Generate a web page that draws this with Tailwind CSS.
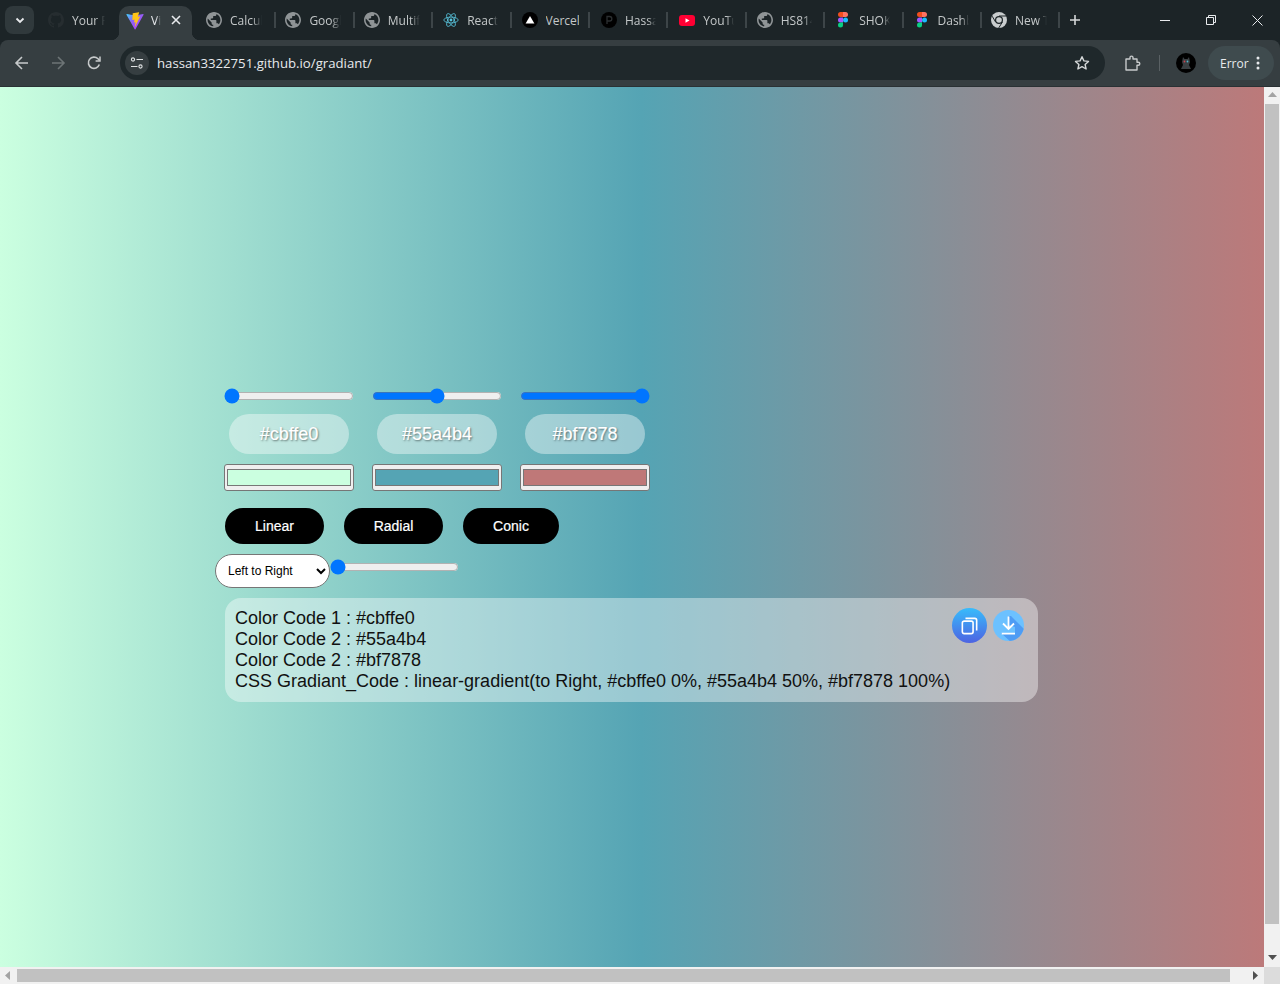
<!DOCTYPE html>
<html>
<head>
<meta charset="utf-8">
<title>Gradiant</title>
<script src="https://cdn.jsdelivr.net/npm/@tailwindcss/browser@4"></script>
</head>
<body class="m-0 w-[1280px] h-[984px] overflow-hidden bg-[#1c2427] font-['Liberation_Sans',Arial,sans-serif]">
<div class="flex flex-col w-[1280px] h-[984px]">

  <!-- Tab strip -->
  <div class="flex items-start h-[40px] bg-[#1c2427] font-['Open_Sans',sans-serif] text-[12px] text-[#c4c8c9] shrink-0">
    <div class="ml-[5px] mt-[6px] w-[29px] h-[28px] rounded-[8px] bg-[#30393c] flex items-center justify-center">
      <svg width="12" height="12" viewBox="0 0 12 12" fill="none" stroke="#e8eaed" stroke-width="1.8"><path d="M2.5 4.5 6 8l3.5-3.5"/></svg>
    </div>
    <!-- tab 1 -->
    <div class="ml-[6px] w-[78px] h-[40px] flex items-center gap-[8px] pl-[8px]">
      <svg width="16" height="16" viewBox="0 0 16 16" fill="#262d30"><path d="M8 0C3.58 0 0 3.58 0 8c0 3.54 2.29 6.53 5.47 7.59.4.07.55-.17.55-.38 0-.19-.01-.82-.01-1.49-2.01.37-2.53-.49-2.69-.94-.09-.23-.48-.94-.82-1.13-.28-.15-.68-.52-.01-.53.63-.01 1.08.58 1.23.82.72 1.21 1.87.87 2.33.66.07-.52.28-.87.51-1.07-1.78-.2-3.64-.89-3.64-3.95 0-.87.31-1.59.82-2.15-.08-.2-.36-1.02.08-2.12 0 0 .67-.21 2.2.82.64-.18 1.32-.27 2-.27s1.36.09 2 .27c1.53-1.04 2.2-.82 2.2-.82.44 1.1.16 1.92.08 2.12.51.56.82 1.27.82 2.15 0 3.07-1.87 3.75-3.65 3.95.29.25.54.73.54 1.48 0 1.07-.01 1.93-.01 2.2 0 .21.15.46.55.38A8.01 8.01 0 0 0 16 8c0-4.42-3.58-8-8-8z"/></svg>
      <span class="w-[33px] pt-[2px] overflow-hidden whitespace-nowrap [mask-image:linear-gradient(to_right,black_70%,transparent)]">Your Repositories</span>
    </div>
    <!-- active tab -->
    <div class="relative mt-[6px] w-[73px] ml-[1px] mr-[4px] h-[34px] pb-[5px] bg-[#363e41] rounded-t-[10px] flex items-center pl-[7px] text-[#e8eaed]">
      <div class="absolute left-[-8px] bottom-0 w-[8px] h-[8px] bg-[radial-gradient(circle_at_0_0,transparent_8px,#363e41_8.5px)]"></div>
      <div class="absolute right-[-8px] bottom-0 w-[8px] h-[8px] bg-[radial-gradient(circle_at_100%_0,transparent_8px,#363e41_8.5px)]"></div>
      <svg width="18" height="18" viewBox="0 0 410 404" fill="none">
        <defs><linearGradient id="vp" x1="0" y1="0" x2="1" y2="1"><stop offset="0" stop-color="#41d1ff"/><stop offset="0.4" stop-color="#8e63f5"/><stop offset="1" stop-color="#bd34fe"/></linearGradient></defs>
        <path fill="url(#vp)" d="M399.641 59.5246L215.643 388.545C211.844 395.338 202.084 395.378 198.228 388.618L10.5817 59.5563C6.38087 52.1896 12.6802 43.2665 21.0281 44.7586L205.223 77.6824C206.398 77.8924 207.601 77.8904 208.776 77.6763L389.119 44.8058C397.439 43.2894 403.768 52.1434 399.641 59.5246Z"/>
        <path fill="#ffc517" d="M292.965 1.5744L156.801 28.2552C154.563 28.6937 152.906 30.5903 152.771 32.8664L144.395 174.33C144.198 177.662 147.258 180.248 150.51 179.498L188.42 170.749C191.967 169.931 195.172 173.055 194.443 176.622L183.18 231.775C182.422 235.487 185.907 238.661 189.532 237.56L212.947 230.446C216.577 229.344 220.065 232.527 219.297 236.242L201.398 322.875C200.278 328.294 207.486 331.249 210.492 326.603L212.5 323.5L323.454 102.072C325.312 98.3645 322.108 94.137 318.036 94.9228L279.014 102.454C275.347 103.161 272.227 99.746 273.262 96.1583L298.731 7.86689C299.767 4.27314 296.636 0.855181 292.965 1.5744Z"/>
      </svg>
      <span class="ml-[7px] w-[10px] overflow-hidden whitespace-nowrap [mask-image:linear-gradient(to_right,black_50%,transparent)]">Vite</span>
      <svg class="absolute left-[52px] top-[9px]" width="10" height="10" viewBox="0 0 10 10" stroke="#e8eaed" stroke-width="1.6"><path d="M1 1l8 8M9 1 1 9"/></svg>
    </div>

    <!-- tab: Calcul -->
    <div class="w-[78.4px] h-[40px] flex items-center gap-[8px] pl-[10px]">
      <svg width="16" height="16" viewBox="2 2 20 20" fill="#8f9496"><path d="M12 2C6.48 2 2 6.48 2 12s4.48 10 10 10 10-4.48 10-10S17.52 2 12 2zm-1 17.93c-3.95-.49-7-3.85-7-7.93 0-.62.08-1.21.21-1.79L9 15v1c0 1.1.9 2 2 2v1.93zm6.9-2.54c-.26-.81-1-1.39-1.9-1.39h-1v-3c0-.55-.45-1-1-1H8v-2h2c.55 0 1-.45 1-1V7h2c1.1 0 2-.9 2-2v-.41c2.93 1.19 5 4.06 5 7.41 0 2.08-.8 3.97-2.1 5.39z"/></svg>
      <span class="w-[32px] pt-[2px] overflow-hidden whitespace-nowrap [mask-image:linear-gradient(to_right,black_70%,transparent)]">Calculator</span>
    </div>
    <!-- tab: Google -->
    <div class="w-[78.4px] h-[40px] flex items-center gap-[8px] pl-[11px] relative">
      <div class="absolute left-0 top-[12px] w-[2px] h-[16px] bg-[#3d4548]"></div>
      <svg width="16" height="16" viewBox="2 2 20 20" fill="#8f9496"><path d="M12 2C6.48 2 2 6.48 2 12s4.48 10 10 10 10-4.48 10-10S17.52 2 12 2zm-1 17.93c-3.95-.49-7-3.85-7-7.93 0-.62.08-1.21.21-1.79L9 15v1c0 1.1.9 2 2 2v1.93zm6.9-2.54c-.26-.81-1-1.39-1.9-1.39h-1v-3c0-.55-.45-1-1-1H8v-2h2c.55 0 1-.45 1-1V7h2c1.1 0 2-.9 2-2v-.41c2.93 1.19 5 4.06 5 7.41 0 2.08-.8 3.97-2.1 5.39z"/></svg>
      <span class="w-[32px] pt-[2px] overflow-hidden whitespace-nowrap [mask-image:linear-gradient(to_right,black_70%,transparent)]">Google Fonts</span>
    </div>
    <!-- tab: Multi -->
    <div class="w-[78.4px] h-[40px] flex items-center gap-[8px] pl-[11px] relative">
      <div class="absolute left-0 top-[12px] w-[2px] h-[16px] bg-[#3d4548]"></div>
      <svg width="16" height="16" viewBox="2 2 20 20" fill="#8f9496"><path d="M12 2C6.48 2 2 6.48 2 12s4.48 10 10 10 10-4.48 10-10S17.52 2 12 2zm-1 17.93c-3.95-.49-7-3.85-7-7.93 0-.62.08-1.21.21-1.79L9 15v1c0 1.1.9 2 2 2v1.93zm6.9-2.54c-.26-.81-1-1.39-1.9-1.39h-1v-3c0-.55-.45-1-1-1H8v-2h2c.55 0 1-.45 1-1V7h2c1.1 0 2-.9 2-2v-.41c2.93 1.19 5 4.06 5 7.41 0 2.08-.8 3.97-2.1 5.39z"/></svg>
      <span class="w-[32px] pt-[2px] overflow-hidden whitespace-nowrap [mask-image:linear-gradient(to_right,black_70%,transparent)]">Multifile</span>
    </div>
    <!-- tab: React -->
    <div class="w-[78.4px] h-[40px] flex items-center gap-[8px] pl-[12px] relative">
      <div class="absolute left-0 top-[12px] w-[2px] h-[16px] bg-[#3d4548]"></div>
      <svg width="16" height="16" viewBox="0 0 16 16" fill="none" stroke="#58c4dc" stroke-width="0.8"><circle cx="8" cy="8" r="1.4" fill="#58c4dc" stroke="none"/><ellipse cx="8" cy="8" rx="7.2" ry="2.9"/><ellipse cx="8" cy="8" rx="7.2" ry="2.9" transform="rotate(60 8 8)"/><ellipse cx="8" cy="8" rx="7.2" ry="2.9" transform="rotate(120 8 8)"/></svg>
      <span class="w-[31px] pt-[2px] overflow-hidden whitespace-nowrap [mask-image:linear-gradient(to_right,black_75%,transparent)]">React Icons</span>
    </div>
    <!-- tab: Vercel -->
    <div class="w-[78.4px] h-[40px] flex items-center gap-[8px] pl-[12px] relative">
      <div class="absolute left-0 top-[12px] w-[2px] h-[16px] bg-[#3d4548]"></div>
      <svg width="16" height="16" viewBox="0 0 16 16"><circle cx="8" cy="8" r="8" fill="#000"/><path d="M8 4l4.4 7.4H3.6z" fill="#fff"/></svg>
      <span class="w-[33px] pt-[2px] overflow-hidden whitespace-nowrap">Vercel</span>
    </div>
    <!-- tab: Hassan -->
    <div class="w-[78.4px] h-[40px] flex items-center gap-[8px] pl-[13px] relative">
      <div class="absolute left-0 top-[12px] w-[2px] h-[16px] bg-[#3d4548]"></div>
      <svg width="16" height="16" viewBox="0 0 16 16"><circle cx="8" cy="8" r="8" fill="#000"/><path d="M6 12V4.5h2.6a2.2 2.2 0 0 1 0 4.5H6" fill="none" stroke="#2b2f31" stroke-width="1.3"/></svg>
      <span class="w-[31px] pt-[2px] overflow-hidden whitespace-nowrap [mask-image:linear-gradient(to_right,black_75%,transparent)]">Hassan</span>
    </div>
    <!-- tab: YouTube -->
    <div class="w-[78.4px] h-[40px] flex items-center gap-[8px] pl-[13px] relative">
      <div class="absolute left-0 top-[12px] w-[2px] h-[16px] bg-[#3d4548]"></div>
      <svg width="16" height="16" viewBox="0 0 16 16"><rect x="0" y="3" width="16" height="11" rx="3" fill="#ff0033"/><path d="M6.5 6.2v4.6l4-2.3z" fill="#fff"/></svg>
      <span class="w-[31px] pt-[2px] overflow-hidden whitespace-nowrap [mask-image:linear-gradient(to_right,black_75%,transparent)]">YouTube</span>
    </div>
    <!-- tab: HS81 -->
    <div class="w-[78.4px] h-[40px] flex items-center gap-[8px] pl-[12px] relative">
      <div class="absolute left-0 top-[12px] w-[2px] h-[16px] bg-[#3d4548]"></div>
      <svg width="16" height="16" viewBox="2 2 20 20" fill="#8f9496"><path d="M12 2C6.48 2 2 6.48 2 12s4.48 10 10 10 10-4.48 10-10S17.52 2 12 2zm-1 17.93c-3.95-.49-7-3.85-7-7.93 0-.62.08-1.21.21-1.79L9 15v1c0 1.1.9 2 2 2v1.93zm6.9-2.54c-.26-.81-1-1.39-1.9-1.39h-1v-3c0-.55-.45-1-1-1H8v-2h2c.55 0 1-.45 1-1V7h2c1.1 0 2-.9 2-2v-.41c2.93 1.19 5 4.06 5 7.41 0 2.08-.8 3.97-2.1 5.39z"/></svg>
      <span class="w-[31px] pt-[2px] overflow-hidden whitespace-nowrap [mask-image:linear-gradient(to_right,black_75%,transparent)]">HS8140</span>
    </div>
    <!-- tab: SHOK -->
    <div class="w-[78.4px] h-[40px] flex items-center gap-[8px] pl-[12px] relative">
      <div class="absolute left-0 top-[12px] w-[2px] h-[16px] bg-[#3d4548]"></div>
      <svg width="16" height="16" viewBox="0 0 16 16"><path d="M3 2.5A2.5 2.5 0 0 1 5.5 0H8v5H5.5A2.5 2.5 0 0 1 3 2.5z" fill="#f24e1e"/><path d="M8 0h2.5a2.5 2.5 0 0 1 0 5H8z" fill="#ff7262"/><path d="M3 8a2.5 2.5 0 0 1 2.5-2.5H8v5H5.5A2.5 2.5 0 0 1 3 8z" fill="#a259ff"/><circle cx="10.5" cy="8" r="2.5" fill="#1abcfe"/><path d="M3 13a2.5 2.5 0 0 1 2.5-2.5H8V13a2.5 2.5 0 0 1-5 0z" fill="#0acf83"/></svg>
      <span class="w-[31px] pt-[2px] overflow-hidden whitespace-nowrap [mask-image:linear-gradient(to_right,black_75%,transparent)]">SHOKZ</span>
    </div>
    <!-- tab: Dashb -->
    <div class="w-[78.4px] h-[40px] flex items-center gap-[8px] pl-[12px] relative">
      <div class="absolute left-0 top-[12px] w-[2px] h-[16px] bg-[#3d4548]"></div>
      <svg width="16" height="16" viewBox="0 0 16 16"><path d="M3 2.5A2.5 2.5 0 0 1 5.5 0H8v5H5.5A2.5 2.5 0 0 1 3 2.5z" fill="#f24e1e"/><path d="M8 0h2.5a2.5 2.5 0 0 1 0 5H8z" fill="#ff7262"/><path d="M3 8a2.5 2.5 0 0 1 2.5-2.5H8v5H5.5A2.5 2.5 0 0 1 3 8z" fill="#a259ff"/><circle cx="10.5" cy="8" r="2.5" fill="#1abcfe"/><path d="M3 13a2.5 2.5 0 0 1 2.5-2.5H8V13a2.5 2.5 0 0 1-5 0z" fill="#0acf83"/></svg>
      <span class="w-[31px] pt-[2px] overflow-hidden whitespace-nowrap [mask-image:linear-gradient(to_right,black_75%,transparent)]">Dashboard</span>
    </div>
    <!-- tab: New Tab -->
    <div class="w-[78.4px] h-[40px] flex items-center gap-[8px] pl-[11px] relative">
      <div class="absolute left-0 top-[12px] w-[2px] h-[16px] bg-[#3d4548]"></div>
      <svg width="16" height="16" viewBox="0 0 16 16"><circle cx="8" cy="8" r="8" fill="#c9cdce"/><circle cx="8" cy="8" r="4" fill="#1c2427"/><circle cx="8" cy="8" r="2.8" fill="#c9cdce"/><path d="M8 4h7.2M4.6 10 1.2 4.2M11.4 10l-3.7 6" stroke="#1c2427" stroke-width="1"/></svg>
      <span class="w-[32px] pt-[2px] overflow-hidden whitespace-nowrap [mask-image:linear-gradient(to_right,black_70%,transparent)]">New Tab</span>
    </div>
    <!-- new tab plus -->
    <div class="relative w-[34px] h-[40px] flex items-center justify-center">
      <div class="absolute left-0 top-[12px] w-[2px] h-[16px] bg-[#3d4548]"></div>
      <svg width="12" height="12" viewBox="0 0 12 12" stroke="#d5d8d9" stroke-width="1.6"><path d="M6 1v10M1 6h10"/></svg>
    </div>
    <!-- window controls -->
    <div class="ml-auto flex items-center h-[40px]">
      <div class="w-[46px] flex justify-center"><svg width="10" height="10" viewBox="0 0 10 10" stroke="#e8eaed"><path d="M0 5.5h10"/></svg></div>
      <div class="w-[46px] flex justify-center"><svg width="10" height="10" viewBox="0 0 10 10" fill="none" stroke="#e8eaed"><path d="M.5 2.5h7v7h-7zM2.5 2.5v-2h7v7h-2"/></svg></div>
      <div class="w-[46px] flex justify-center"><svg width="11" height="11" viewBox="0 0 11 11" stroke="#e8eaed"><path d="M.5.5l10 10M10.5.5l-10 10"/></svg></div>
    </div>
  </div>

  <!-- Toolbar -->
  <div class="h-[47px] shrink-0 bg-[#363e41] rounded-t-[8px] flex items-center pl-[4px] border-b border-[#2a3134] font-['Open_Sans',sans-serif]">
    <div class="w-[36px] flex justify-center"><svg width="16" height="16" viewBox="0 0 16 16" fill="none" stroke="#c7cacb" stroke-width="1.6"><path d="M14 8H2.5M8 2 2 8l6 6"/></svg></div>
    <div class="w-[36px] flex justify-center"><svg width="16" height="16" viewBox="0 0 16 16" fill="none" stroke="#6d7476" stroke-width="1.6"><path d="M2 8h11.5M8 2l6 6-6 6"/></svg></div>
    <div class="w-[36px] flex justify-center"><svg width="16" height="16" viewBox="0 0 16 16" fill="none" stroke="#c7cacb" stroke-width="1.6"><path d="M13.3 9.5A5.6 5.6 0 1 1 12 3.8l1.6 1.7"/><path d="M14 1.5v4.4H9.6" stroke-width="1.5"/></svg></div>
    <div class="ml-[8px] w-[985px] h-[34px] rounded-full bg-[#1f282b] flex items-center pl-[5px] pr-[15px]">
      <div class="w-[24px] h-[24px] rounded-full bg-[#363e41] flex items-center justify-center">
        <svg width="14" height="14" viewBox="0 0 14 14" fill="none" stroke="#dfe2e3" stroke-width="1.1"><circle cx="3" cy="3.5" r="1.6"/><path d="M6.5 3.5H13M1 10.5h6.5"/><circle cx="10.5" cy="10.5" r="1.6"/></svg>
      </div>
      <span class="ml-[8px] pt-[2px] text-[13.2px] text-[#e8eaed] whitespace-nowrap">hassan3322751.github.io/gradiant/</span>
      <svg class="ml-auto" width="16" height="16" viewBox="0 0 16 16" fill="none" stroke="#d5d8d9" stroke-width="1.4" stroke-linejoin="round"><path d="M8 1.7l1.9 4.2 4.6.5-3.4 3.1 1 4.5L8 11.7l-4.1 2.3 1-4.5-3.4-3.1 4.6-.5z"/></svg>
    </div>
    <div class="ml-[10px] w-[36px] flex justify-center"><svg width="16" height="17" viewBox="0 0 16 17" fill="none" stroke="#c7cacb" stroke-width="1.4" stroke-linejoin="round"><path d="M1 4h4V2.6a1.5 1.5 0 0 1 3 0V4h4v3.3h1.3a1.5 1.5 0 0 1 0 3H12V15H1v-3.6h0V4z"/></svg></div>
    <div class="ml-[8px] w-[1px] h-[16px] bg-[#5a6164]"></div>
    <div class="ml-[16px] w-[20px] h-[20px] rounded-full bg-black flex items-center justify-center">
      <svg width="12" height="14" viewBox="0 0 12 14" fill="#3a3f42"><path d="M3 1l1.5 2h3L9 1l1 5-1 3 2 4H1l2-4-1-3z"/><circle cx="4.5" cy="5.5" r=".9" fill="#c9414f"/><circle cx="7.5" cy="5.5" r=".9" fill="#4fb7c9"/></svg>
    </div>
    <div class="ml-[12px] w-[66px] h-[34px] rounded-full bg-[#3f4b4e] flex items-center pl-[12px] text-[12px] text-[#e8eaed]">
      <span class="pt-[2px]">Error</span>
      <svg class="ml-[7px]" width="4" height="14" viewBox="0 0 4 14" fill="#e8eaed"><circle cx="2" cy="2" r="1.5"/><circle cx="2" cy="7" r="1.5"/><circle cx="2" cy="12" r="1.5"/></svg>
    </div>
  </div>

  <!-- Viewport and scrollbars -->
  <div class="flex-1 flex min-h-0">
    <div class="w-[1264px] overflow-hidden">
      <div class="w-[1282px] h-full bg-[linear-gradient(to_right,#cbffe0_0%,#55a4b4_50%,#bf7878_100%)] pt-[301px] pl-[224px]">
        <!-- Sliders -->
        <div class="flex gap-[18px] h-[16px]">
          <input type="range" min="0" max="100" value="0" class="block m-0 w-[130px] h-[16px]">
          <input type="range" min="0" max="100" value="50" class="block m-0 w-[130px] h-[16px]">
          <input type="range" min="0" max="100" value="100" class="block m-0 w-[130px] h-[16px]">
        </div>
        <!-- Hex pills -->
        <div class="flex gap-[28px] pl-[5px] mt-[10px]">
          <div class="w-[120px] h-[40px] rounded-[20px] bg-white/40 flex items-center justify-center text-[18px] text-white [-webkit-text-stroke:0.2px_white] [text-shadow:1px_1px_2px_rgba(0,0,0,0.5)]">#cbffe0</div>
          <div class="w-[120px] h-[40px] rounded-[20px] bg-white/40 flex items-center justify-center text-[18px] text-white [-webkit-text-stroke:0.2px_white] [text-shadow:1px_1px_2px_rgba(0,0,0,0.5)]">#55a4b4</div>
          <div class="w-[120px] h-[40px] rounded-[20px] bg-white/40 flex items-center justify-center text-[18px] text-white [-webkit-text-stroke:0.2px_white] [text-shadow:1px_1px_2px_rgba(0,0,0,0.5)]">#bf7878</div>
        </div>
        <!-- Colour inputs -->
        <div class="flex gap-[18px] mt-[10px]">
          <input type="color" value="#cbffe0" class="block w-[130px] h-[27px] bg-[#efefef] border border-[#767676] rounded-[3px] p-0">
          <input type="color" value="#55a4b4" class="block w-[130px] h-[27px] bg-[#efefef] border border-[#767676] rounded-[3px] p-0">
          <input type="color" value="#bf7878" class="block w-[130px] h-[27px] bg-[#efefef] border border-[#767676] rounded-[3px] p-0">
        </div>
        <!-- Type buttons -->
        <div class="flex gap-[20px] pl-[1px] mt-[17px]">
          <button class="w-[99px] h-[36px] rounded-[18px] bg-black text-white text-[14px] [-webkit-text-stroke:0.2px_white]">Linear</button>
          <button class="w-[99px] h-[36px] rounded-[18px] bg-black text-white text-[14px] [-webkit-text-stroke:0.2px_white]">Radial</button>
          <button class="w-[96px] h-[36px] rounded-[18px] bg-black text-white text-[14px] [-webkit-text-stroke:0.2px_white]">Conic</button>
        </div>
        <!-- Direction row -->
        <div class="flex items-start ml-[-9px] mt-[10px]">
          <select class="block w-[115px] h-[34px] bg-white text-black text-[12px] border border-[#767676] rounded-[17px] pl-[8px]">
            <option>Left to Right</option>
          </select>
          <input type="range" min="0" max="100" value="0" class="block m-0 mt-[5px] w-[129px] h-[16px]">
        </div>
        <!-- Output panel -->
        <div class="relative w-[813px] h-[104px] ml-[1px] mt-[10px] p-[10px] rounded-[16px] bg-white/40 text-[18px] leading-[21px] text-[#111] whitespace-nowrap">
          <div>Color Code 1 : #cbffe0</div>
          <div>Color Code 2 : #55a4b4</div>
          <div>Color Code 2 : #bf7878</div>
          <div>CSS Gradiant_Code : linear-gradient(to Right, #cbffe0 0%, #55a4b4 50%, #bf7878 100%)</div>
          <div class="absolute right-[14px] top-[10px] flex items-center gap-[6px]">
            <div class="w-[35px] h-[35px] rounded-full bg-[linear-gradient(to_bottom,#38bcfb,#4d63e2)] flex items-center justify-center">
              <svg width="17" height="18" viewBox="0 0 19 20" fill="none" stroke="#fff" stroke-width="1.8" stroke-linejoin="round"><rect x="1.5" y="4.5" width="12" height="14" rx="2"/><path d="M5 1.5h10.5a2 2 0 0 1 2 2V15"/></svg>
            </div>
            <div class="relative w-[31px] h-[31px] rounded-full overflow-hidden bg-[#6cc1ff]">
              <svg class="absolute inset-0" width="31" height="31" viewBox="0 0 31 31"><path d="M16 6h2l15 15v12H19L8 23h14v-6l-6-2z" fill="#4e9cf4"/><path d="M15.5 6.5v12.5M10 13.5l5.5 5.5 5.5-5.5M8.7 23.7H22" fill="none" stroke="#fff" stroke-width="1.8"/></svg>
            </div>
          </div>
        </div>
      </div>
    </div>
    <!-- Vertical scrollbar -->
    <div class="w-[16px] bg-[#f1f1f1] flex flex-col items-center">
      <svg class="mt-[5px]" width="9" height="6" viewBox="0 0 9 6" fill="#a3a3a3"><path d="M4.5 0 9 5H0z"/></svg>
      <div class="mt-[6px] w-[14px] h-[820px] bg-[#c1c1c1]"></div>
      <svg class="mt-auto mb-[6px]" width="9" height="6" viewBox="0 0 9 6" fill="#505050"><path d="M4.5 5 0 0h9z"/></svg>
    </div>
  </div>

  <!-- Horizontal scrollbar -->
  <div class="h-[17px] shrink-0 flex bg-[#f1f1f1]">
    <div class="w-[1264px] flex items-center">
      <svg class="ml-[5px]" width="6" height="9" viewBox="0 0 6 9" fill="#a3a3a3"><path d="M0 4.5 5 0v9z"/></svg>
      <div class="ml-[6px] w-[1213px] h-[13px] bg-[#c1c1c1]"></div>
      <svg class="ml-auto mr-[6px]" width="6" height="9" viewBox="0 0 6 9" fill="#505050"><path d="M6 4.5 1 0v9z"/></svg>
    </div>
    <div class="w-[16px] bg-[#dcdcdc]"></div>
  </div>
</div>
</body>
</html>
